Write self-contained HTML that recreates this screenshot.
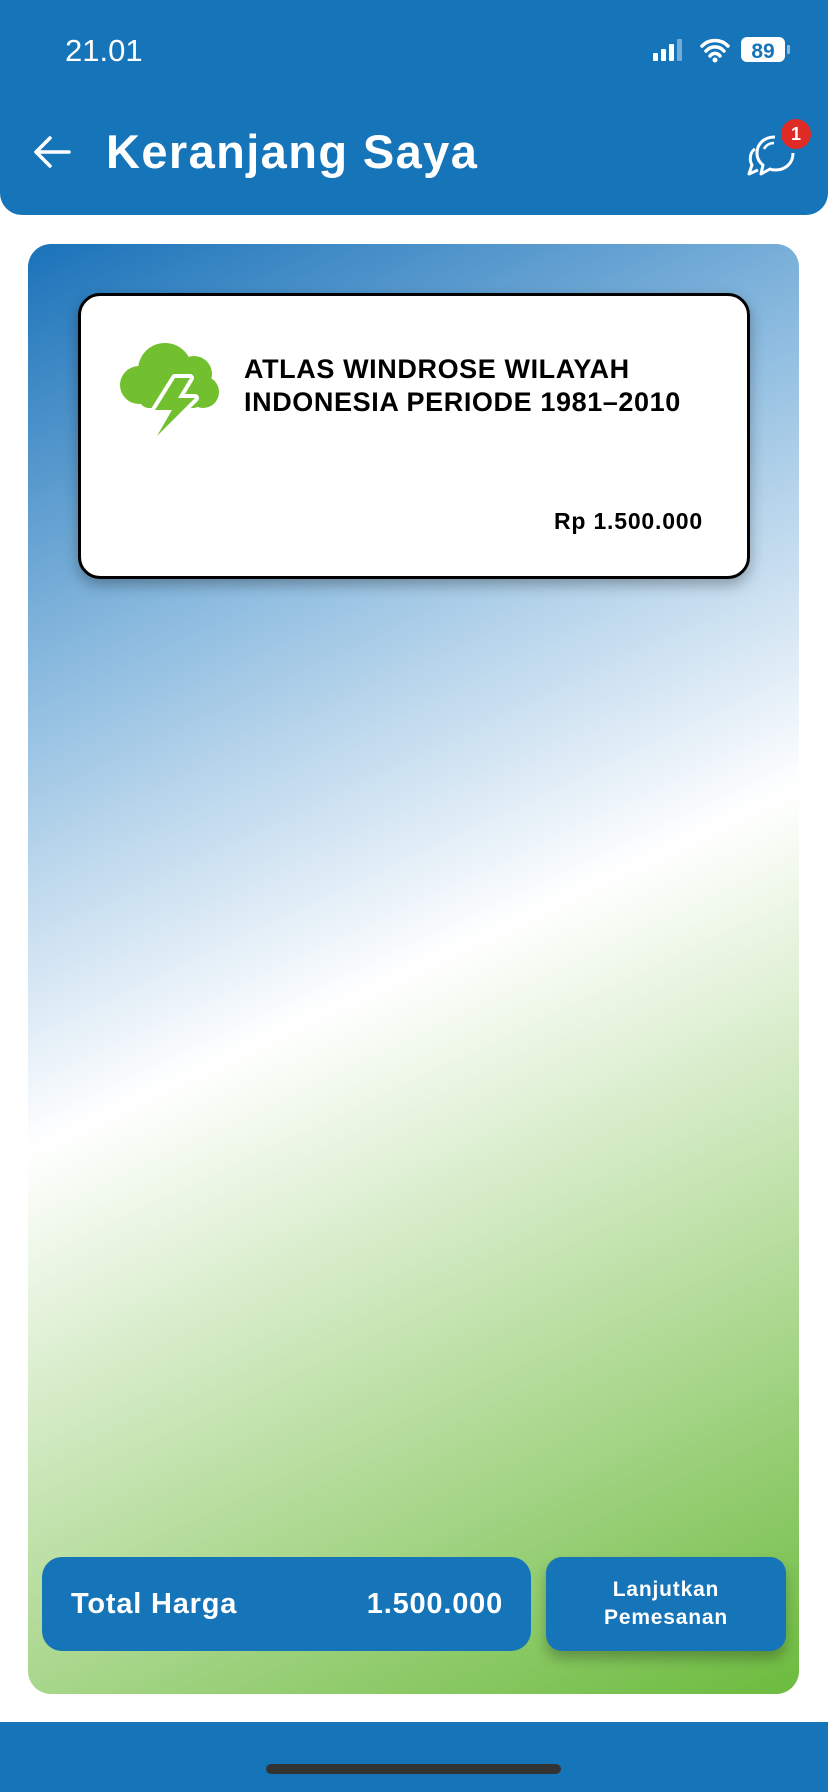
<!DOCTYPE html>
<html><head><meta charset="utf-8"><style>
*{margin:0;padding:0;box-sizing:border-box}
body{width:828px;height:1792px;background:#fff;position:relative;overflow:hidden;font-family:"Liberation Sans",sans-serif}
.hdr{position:absolute;left:0;top:0;width:828px;height:215px;background:#1674b9;border-radius:0 0 22px 22px}
.time{position:absolute;left:65px;top:33px;color:#fff;font-size:31px}
.title{position:absolute;left:106px;top:124px;color:#fff;font-size:47px;font-weight:bold;letter-spacing:1.4px}
.panel{position:absolute;left:28px;top:244px;width:771px;height:1450px;border-radius:23px;
background:linear-gradient(154.7deg,#1a72b9 0%,#8fbde0 25%,#ffffff 50%,#bfe1a9 72%,#6cbb3e 100%)}
.card{position:absolute;left:78px;top:293px;width:672px;height:286px;background:#fff;border:3px solid #000;border-radius:22px;box-shadow:0 6px 14px rgba(0,0,0,.3)}
.ct{position:absolute;left:163px;top:57px;font-size:27px;font-weight:bold;line-height:33px;color:#000;letter-spacing:0.6px}
.price{position:absolute;right:44px;top:212px;font-size:23px;font-weight:bold;letter-spacing:0.8px}
.tot{position:absolute;left:42px;top:1557px;width:489px;height:94px;background:#1674b9;border-radius:20px;color:#fff;font-weight:bold;font-size:29px;letter-spacing:0.8px}
.btn{position:absolute;left:546px;top:1557px;width:240px;height:94px;background:#1674b9;border-radius:16px;color:#fff;font-weight:bold;font-size:21px;letter-spacing:0.8px;text-align:center;line-height:28px;padding-top:19px;box-shadow:0 8px 12px rgba(0,0,0,.25)}
.bot{position:absolute;left:0;top:1722px;width:828px;height:70px;background:#1674b9}
.home{position:absolute;left:266px;top:1764px;width:295px;height:10px;border-radius:5px;background:#333}
</style></head><body>
<div class="hdr">
 <div class="time">21.01</div>
 <svg style="position:absolute;left:652px;top:36px" width="140" height="28" viewBox="0 0 140 28">
  <rect x="1" y="17" width="5" height="8" rx="1" fill="#fff"/><rect x="9" y="13" width="5" height="12" rx="1" fill="#fff"/><rect x="17" y="8" width="5" height="17" rx="1" fill="#fff"/><rect x="25" y="3" width="5" height="22" rx="1" fill="#fff" opacity=".4"/>
  <path d="M50 10a18 18 0 0 1 26 0M54 15a12 12 0 0 1 18 0M58 20a6 6 0 0 1 10 0" stroke="#fff" stroke-width="3.5" fill="none" stroke-linecap="round"/><circle cx="63" cy="24" r="2.5" fill="#fff"/>
  <rect x="89" y="1" width="44" height="25" rx="6" fill="#fff"/><rect x="135" y="9" width="3" height="9" rx="1" fill="#fff" opacity=".5"/>
  <text x="111" y="22" text-anchor="middle" font-family="Liberation Sans" font-weight="bold" font-size="21" fill="#1674b9">89</text>
 </svg>
 <svg style="position:absolute;left:32px;top:134px" width="40" height="36" viewBox="0 0 40 36"><path d="M37 18H4M18 4L4 18l14 14" stroke="#fff" stroke-width="3.5" fill="none" stroke-linecap="round" stroke-linejoin="round"/></svg>
 <div class="title">Keranjang Saya</div>
 <svg style="position:absolute;left:745px;top:125px" width="56" height="56" viewBox="0 0 56 56"><path d="M30 12C19 12 12 19 12 28c0 5 2 9 6 12l-2 9 9-5c2 1 4 1 5 1 11 0 18-7 18-17" stroke="#fff" stroke-width="3" fill="none" stroke-linejoin="round"/><path d="M10 24C5 27 4 35 7 40l-3 9 9-4" stroke="#fff" stroke-width="3" fill="none" stroke-linejoin="round"/><path d="M19 24c2-4 6-6 10-6" stroke="#fff" stroke-width="2.5" fill="none"/></svg>
 <div style="position:absolute;left:781px;top:119px;width:30px;height:30px;border-radius:50%;background:#e02b27;color:#fff;font-weight:bold;font-size:18px;text-align:center;line-height:30px">1</div>
</div>
<div class="panel"></div>
<div class="card">
 <svg style="position:absolute;left:38px;top:44px" width="104" height="100" viewBox="0 0 104 100">
  <g fill="#72bf2f">
   <circle cx="20" cy="45" r="19"/><circle cx="46" cy="30" r="27"/><circle cx="75" cy="34" r="18"/><circle cx="84" cy="52" r="16"/>
   <rect x="20" y="40" width="64" height="28" rx="10"/>
  </g>
  <path d="M56 38L36 70h17L38 96l38-38H59l12-20z" fill="#fff" stroke="#fff" stroke-width="8" stroke-linejoin="round"/>
  <path d="M56 38L36 70h17L38 96l38-38H59l12-20z" fill="#72bf2f"/>
 </svg>
 <div class="ct">ATLAS WINDROSE WILAYAH<br>INDONESIA PERIODE 1981–2010</div>
 <div class="price">Rp 1.500.000</div>
</div>
<div class="tot"><span style="position:absolute;left:29px;top:31px">Total Harga</span><span style="position:absolute;right:28px;top:31px">1.500.000</span></div>
<div class="btn">Lanjutkan<br>Pemesanan</div>
<div class="bot"></div>
<div class="home"></div>
</body></html>
